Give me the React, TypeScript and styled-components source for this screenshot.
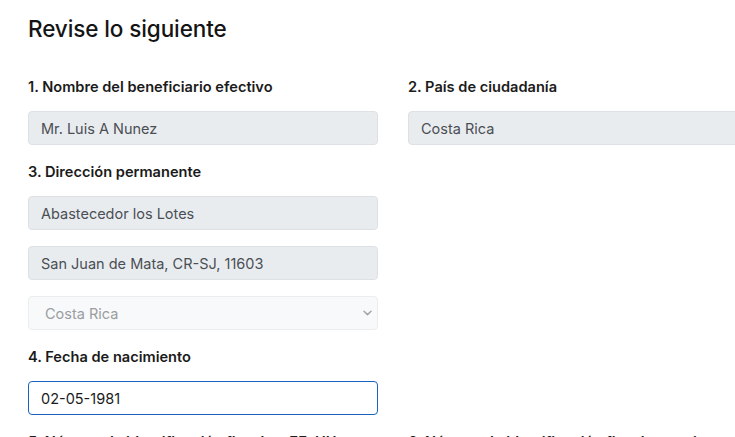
import React, { useState } from 'react';
import styled, { createGlobalStyle } from 'styled-components';

const GlobalStyle = createGlobalStyle`
  html, body {
    margin: 0;
    padding: 0;
    background: #ffffff;
    overflow: hidden;
  }

  body {
    font-family: 'Inter', 'Open Sans', 'Liberation Sans', sans-serif;
    color: #1b1b1b;
  }
`;

const StyledPage = styled.div`
  width: 735px;
  height: 437px;
  overflow: hidden;
  padding: 15px 0 0 28px;
  box-sizing: border-box;
`;

const StyledTitle = styled.h2`
  margin: 0 0 34px;
  font-size: 22.5px;
  line-height: 28px;
  font-weight: 500;
  color: #141414;
  letter-spacing: -0.1px;
`;

const StyledGrid = styled.div`
  display: grid;
  grid-template-columns: 350px 350px;
  column-gap: 30px;
  align-items: start;
`;

const StyledGroup = styled.div`
  display: flex;
  flex-direction: column;
  gap: 16px;
  margin-bottom: 17px;
`;

const StyledLabel = styled.label`
  display: block;
  margin-bottom: -2px;
  font-size: 14.6px;
  line-height: 20px;
  font-weight: 600;
  color: #1b1b1b;
  white-space: nowrap;
`;

const StyledInput = styled.input<{ $focused?: boolean }>`
  box-sizing: border-box;
  width: 100%;
  height: 34px;
  padding: 0 12px;
  font-family: inherit;
  font-size: 14.5px;
  border-radius: 4px;
  outline: none;
  border: 1px solid ${p => (p.$focused ? '#1a62c0' : '#dde1e5')};
  background: ${p => (p.$focused ? '#ffffff' : '#e9ecef')};
  color: ${p => (p.$focused ? '#1b1b1b' : '#4a4f55')};
`;

const StyledSelectWrap = styled.div`
  position: relative;
  width: 100%;
`;

const StyledSelect = styled.select`
  box-sizing: border-box;
  width: 100%;
  height: 34px;
  padding: 0 16px;
  appearance: none;
  font-family: inherit;
  font-size: 14.5px;
  border: 1px solid #ebedef;
  border-radius: 4px;
  background: #f8f9fa;
  color: #9a9da1;
  opacity: 1;
`;

const StyledChevron = styled.svg`
  position: absolute;
  right: 6px;
  top: 14px;
  pointer-events: none;
`;

const fields = {
  name: 'Mr. Luis A Nunez',
  country: 'Costa Rica',
  street: 'Abastecedor los Lotes',
  city: 'San Juan de Mata, CR-SJ, 11603',
};

function App() {
  const [birthDate, setBirthDate] = useState('02-05-1981');

  return (
    <>
      <GlobalStyle />
      <StyledPage>
        <StyledTitle>Revise lo siguiente</StyledTitle>
        <StyledGrid>
          <StyledGroup>
            <StyledLabel>1. Nombre del beneficiario efectivo</StyledLabel>
            <StyledInput value={fields.name} readOnly />
          </StyledGroup>
          <StyledGroup>
            <StyledLabel>2. País de ciudadanía</StyledLabel>
            <StyledInput value={fields.country} readOnly />
          </StyledGroup>

          <StyledGroup>
            <StyledLabel>3. Dirección permanente</StyledLabel>
            <StyledInput value={fields.street} readOnly />
            <StyledInput value={fields.city} readOnly />
            <StyledSelectWrap>
              <StyledSelect disabled value="CR" onChange={() => {}}>
                <option value="CR">Costa Rica</option>
              </StyledSelect>
              <StyledChevron width="9" height="6" viewBox="0 0 9 6">
                <path d="M1 1.2l3.5 3.4 3.5-3.4" fill="none" stroke="#a3a6aa" strokeWidth="1.5" strokeLinecap="round" strokeLinejoin="round" />
              </StyledChevron>
            </StyledSelectWrap>
          </StyledGroup>
          <div />

          <StyledGroup>
            <StyledLabel>4. Fecha de nacimiento</StyledLabel>
            <StyledInput $focused value={birthDate} onChange={e => setBirthDate(e.target.value)} />
          </StyledGroup>
          <div />

          <StyledGroup>
            <StyledLabel>5. Número de identificación fiscal en EE. UU.</StyledLabel>
          </StyledGroup>
          <StyledGroup>
            <StyledLabel>6. Número de identificación fiscal extranjero</StyledLabel>
          </StyledGroup>
        </StyledGrid>
      </StyledPage>
    </>
  );
}

export default App;
